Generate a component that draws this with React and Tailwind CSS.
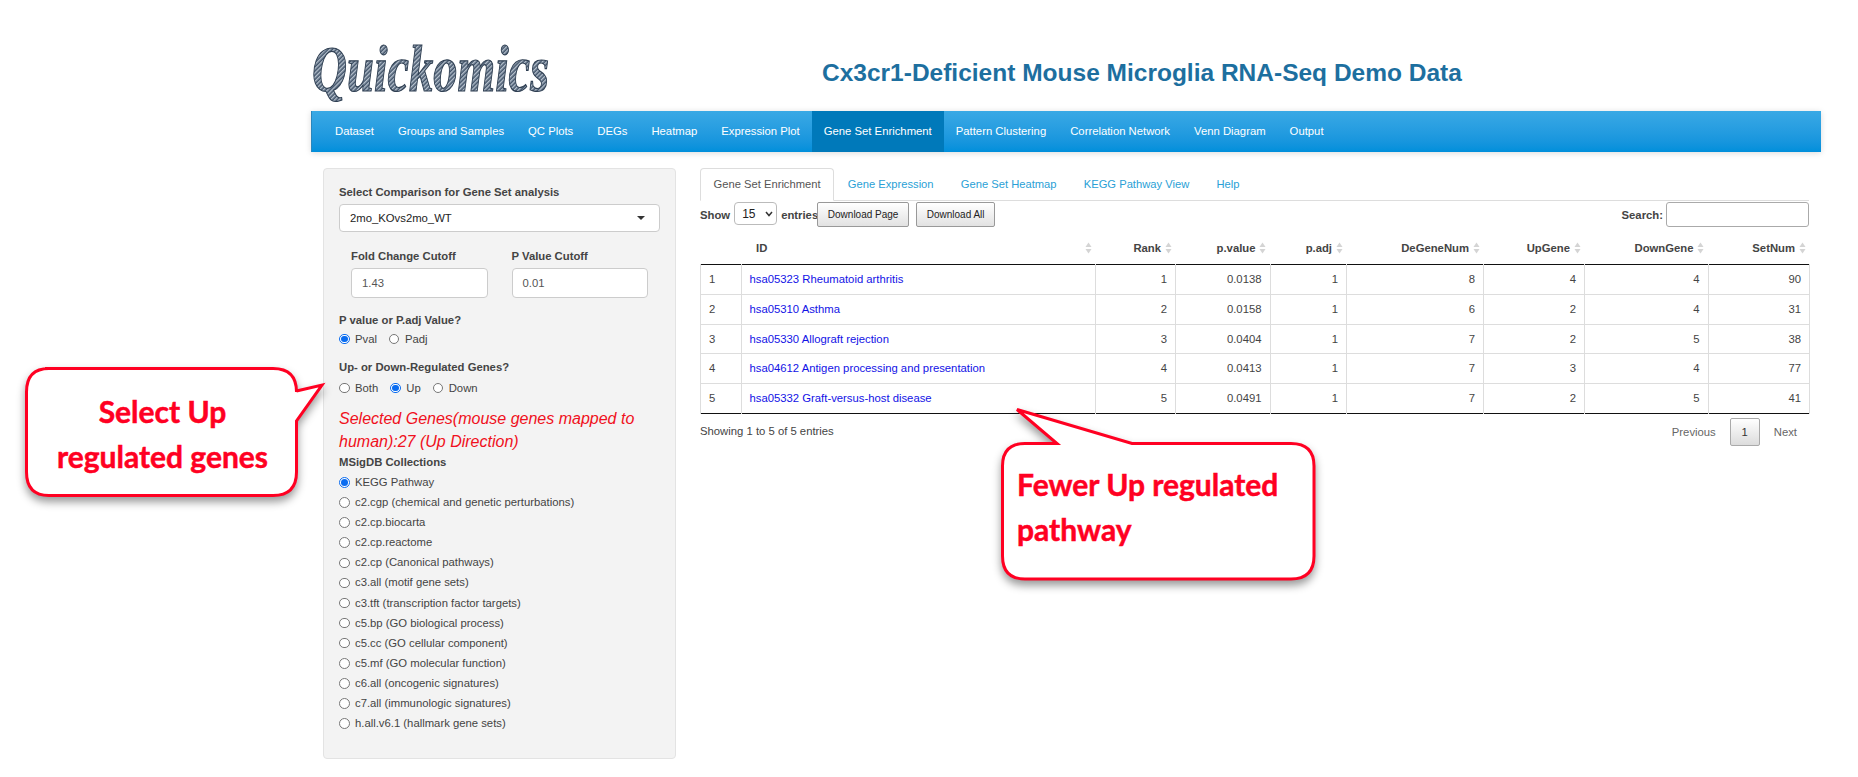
const navItems = ["Dataset","Groups and Samples","QC Plots","DEGs","Heatmap","Expression Plot","Gene Set Enrichment","Pattern Clustering","Correlation Network","Venn Diagram","Output"];
const tabs = ["Gene Set Enrichment","Gene Expression","Gene Set Heatmap","KEGG Pathway View","Help"];
const collections = ["KEGG Pathway","c2.cgp (chemical and genetic perturbations)","c2.cp.biocarta","c2.cp.reactome","c2.cp (Canonical pathways)","c3.all (motif gene sets)","c3.tft (transcription factor targets)","c5.bp (GO biological process)","c5.cc (GO cellular component)","c5.mf (GO molecular function)","c6.all (oncogenic signatures)","c7.all (immunologic signatures)","h.all.v6.1 (hallmark gene sets)"];
const headers = [
  ["", "w-[40.5px]"],["ID", "w-[354.5px]"],["Rank", "w-[80px]"],["p.value", "w-[94.5px]"],["p.adj", "w-[76.5px]"],["DeGeneNum", "w-[137px]"],["UpGene", "w-[101px]"],["DownGene", "w-[123.5px]"],["SetNum", "w-[101.5px]"],
];
const rows = [
  ["1","hsa05323 Rheumatoid arthritis","1","0.0138","1","8","4","4","90"],
  ["2","hsa05310 Asthma","2","0.0158","1","6","2","4","31"],
  ["3","hsa05330 Allograft rejection","3","0.0404","1","7","2","5","38"],
  ["4","hsa04612 Antigen processing and presentation","4","0.0413","1","7","3","4","77"],
  ["5","hsa05332 Graft-versus-host disease","5","0.0491","1","7","2","5","41"],
];

function Radio({ checked, label, className = "" }) {
  return (
    <label className={`flex items-center gap-[5.5px] ${className}`}>
      <span className={`w-[10.5px] h-[10.5px] rounded-full shrink-0 flex items-center justify-center bg-white border ${checked ? "border-[#0a6cf0]" : "border-[#777]"}`}>
        {checked && <span className="w-[6.5px] h-[6.5px] rounded-full bg-[#0a6cf0]" />}
      </span>
      <span>{label}</span>
    </label>
  );
}

function Sort({ className = "" }) {
  return (
    <svg width="7" height="12" viewBox="0 0 7 12" className={className}>
      <path d="M3.5 0.5 L6.5 5 H0.5 Z" fill="#d4d4d4" />
      <path d="M3.5 11.5 L6.5 7 H0.5 Z" fill="#d4d4d4" />
    </svg>
  );
}

function Logo() {
  return (
    <svg width="244" height="66" viewBox="0 0 244 66" role="img" aria-label="Quickomics" className="overflow-visible">
      <defs>
        <pattern id="rope" width="3" height="3" patternUnits="userSpaceOnUse" patternTransform="rotate(45)">
          <rect width="3" height="3" fill="#44566c" />
          <rect width="1.4" height="3" fill="#b6c1cd" />
        </pattern>
      </defs>
      <text x="1" y="49" fontFamily="'Liberation Serif', serif" fontStyle="italic" fontWeight="700" fontSize="66" textLength="237" lengthAdjust="spacingAndGlyphs" fill="url(#rope)" stroke="#2f3f52" strokeWidth="1.2">Quickomics</text>
    </svg>
  );
}

function Callout({ className, viewBox, width, height, d, children }) {
  return (
    <div className={`absolute ${className}`} style={{ width, height }}>
      <svg width={width} height={height} viewBox={viewBox} className="absolute inset-0 overflow-visible drop-shadow-[0_5px_4px_rgba(0,0,0,0.4)]">
        <path d={d} fill="#fff" stroke="#ff0022" strokeWidth="3" strokeLinejoin="miter" />
      </svg>
      {children}
    </div>
  );
}

export default function App() {
  return (
    <div className="relative w-[1858px] h-[777px] overflow-hidden bg-white text-[11.3px] text-[#333] font-['Liberation_Sans',Arial,sans-serif]">
      <div className="ml-[311px] w-[1510px]">
        <header className="h-[111px] flex items-start">
          <div className="w-[244px] h-[66px] mt-[42px] shrink-0"><Logo /></div>
          <h1 className="ml-[267px] mt-[59px] text-[24.5px] leading-[28px] font-bold text-[#1d6f9f] whitespace-nowrap">Cx3cr1-Deficient Mouse Microglia RNA-Seq Demo Data</h1>
        </header>
        <nav className="h-[41px] pl-[11px] flex bg-gradient-to-b from-[#39a9e5] to-[#008fdb] shadow-[0_1px_6px_rgba(0,0,0,0.15)] border-l border-[#2a86bd]">
          {navItems.map((n) => (
            <a key={n} className={`px-[12px] flex items-center text-white whitespace-nowrap ${n === "Gene Set Enrichment" ? "bg-[#0079ba]" : ""}`}>{n}</a>
          ))}
        </nav>
        <div className="flex mt-[16px]">
          <aside className="ml-[12px] w-[353px] h-[591px] shrink-0 bg-[#f3f3f3] border border-[#e3e3e3] rounded-[4px] pt-[16px] px-[15px] text-[#444]">
            <div className="font-bold leading-[14px]">Select Comparison for Gene Set analysis</div>
            <div className="mt-[5px] h-[28px] w-[321px] bg-white border border-[#ccc] rounded-[4px] flex items-center justify-between pl-[10px] pr-[14px] text-[#222]">
              <span>2mo_KOvs2mo_WT</span>
              <span className="w-0 h-0 border-x-[4px] border-x-transparent border-t-[4.5px] border-t-[#333]" />
            </div>
            <div className="flex gap-[24px] pl-[12px] mt-[17px]">
              {[["Fold Change Cutoff","1.43"],["P Value Cutoff","0.01"]].map(([l,v]) => (
                <div key={l} className="w-[136.5px]">
                  <div className="font-bold leading-[14px]">{l}</div>
                  <div className="mt-[5px] h-[30px] bg-white border border-[#ccc] rounded-[4px] flex items-center pl-[10px] text-[#555]">{v}</div>
                </div>
              ))}
            </div>
            <div className="font-bold leading-[14px] mt-[15px]">P value or P.adj Value?</div>
            <div className="flex gap-[12px] mt-[4px] h-[16px] items-center">
              <Radio checked label="Pval" /><Radio label="Padj" />
            </div>
            <div className="font-bold leading-[14px] mt-[13px]">Up- or Down-Regulated Genes?</div>
            <div className="flex gap-[12px] mt-[6px] h-[16px] items-center">
              <Radio label="Both" /><Radio checked label="Up" /><Radio label="Down" />
            </div>
            <div className="mt-[12px] text-[16px] leading-[22.5px] italic text-[#f01020]">Selected Genes(mouse genes mapped to human):27 (Up Direction)</div>
            <div className="font-bold leading-[14px] mt-[2px]">MSigDB Collections</div>
            <div className="mt-[3.4px] flex flex-col">
              {collections.map((c, i) => (
                <Radio key={c} checked={i === 0} label={c} className="h-[20.1px]" />
              ))}
            </div>
          </aside>
          <main className="ml-[24px] w-[1109px] shrink-0">
            <div className="flex h-[33px] border-b border-[#ddd] text-[11.2px]">
              {tabs.map((t, i) => (
                <a key={t} className={`h-[33px] flex items-center whitespace-nowrap rounded-t-[4px] border ${i === 0 ? "px-[12.6px] text-[#555] bg-white border-[#ddd] border-b-white" : "px-[12.6px] text-[#2a9fd6] border-transparent"}`}>{t}</a>
              ))}
            </div>
            <div className="flex items-start h-[34px]">
              <b className="mt-[6px] text-[#444]">Show</b>
              <div className="ml-[4px] mt-[1px] w-[43px] h-[23px] bg-white border border-[#bbb] rounded-[4px] flex items-center justify-between pl-[7px] pr-[3px] text-[12px] text-[#222]">
                <span>15</span>
                <svg width="8" height="6" viewBox="0 0 8 6"><path d="M1 1 L4 4.5 L7 1" fill="none" stroke="#333" strokeWidth="1.5" /></svg>
              </div>
              <b className="ml-[4px] mt-[6px] w-[36px] text-[#444] whitespace-nowrap">entries</b>
              <button className="mt-[1px] w-[92px] h-[25px] bg-gradient-to-b from-white to-[#e2e2e2] border border-[#999] rounded-[2px] text-[10px] text-[#222]">Download Page</button>
              <button className="ml-[7px] mt-[1px] w-[79px] h-[25px] bg-gradient-to-b from-white to-[#e2e2e2] border border-[#999] rounded-[2px] text-[10px] text-[#222]">Download All</button>
              <b className="ml-auto mt-[6px] text-[#444]">Search:</b>
              <div className="ml-[3px] mt-[1px] w-[143px] h-[25px] bg-white border border-[#aaa] rounded-[3px]" />
            </div>
            <table className="table-fixed border-collapse w-[1109px]">
              <thead>
                <tr className="border-b-[1.5px] border-[#111]">
                  {headers.map(([h, w], i) => (
                    <th key={i} className={`${w} p-0 pt-[6px] pb-[9px] font-bold leading-[14px] text-[#444]`}>
                      {h && (i === 1 ? (
                        <div className="flex items-center justify-between pl-[15px] pr-[4px]"><span>{h}</span><Sort /></div>
                      ) : (
                        <div className="flex items-center justify-end gap-[3.5px] pr-[4px]"><span>{h}</span><Sort /></div>
                      ))}
                    </th>
                  ))}
                </tr>
              </thead>
              <tbody>
                {rows.map((r) => (
                  <tr key={r[0]} className="h-[29.8px] border-b border-[#ddd] last:border-[#111]">
                    {r.map((c, i) => (
                      <td key={i} className={`px-[8px] py-0 border-x border-[#ddd] text-[#444] ${i < 2 ? "text-left" : "text-right"}`}>
                        {i === 1 ? <a className="text-[#1212e6]">{c}</a> : c}
                      </td>
                    ))}
                  </tr>
                ))}
              </tbody>
            </table>
            <div className="flex items-center justify-between mt-[4px] h-[28px] text-[#444]">
              <span className="mb-[2px]">Showing 1 to 5 of 5 entries</span>
              <div className="flex items-center">
                <span className="text-[#666] mr-[14px]">Previous</span>
                <span className="w-[30px] h-[28px] flex items-center justify-center bg-gradient-to-b from-white to-[#dcdcdc] border border-[#aaa] rounded-[2px] text-[#333]">1</span>
                <span className="text-[#666] ml-[14px] mr-[12px]">Next</span>
              </div>
            </div>
          </main>
        </div>
      </div>

      <Callout className="left-[23px] top-[366px]" width={302} height={132} viewBox="0 0 302 132"
        d="M22 2.5 H250 Q273.5 2.5 273.5 26 V25 L299 19 L273.5 55 V106 Q273.5 129.5 250 129.5 H26 Q3.5 129.5 3.5 106 V26 Q3.5 2.5 26 2.5 Z">
        <div className="absolute inset-x-[3px] top-[23px] w-[273px] text-center font-['Lato',sans-serif] font-bold [-webkit-text-stroke:0.5px_#ff0022] text-[#ff0022] text-[30px] leading-[45px]">Select Up<br />regulated genes</div>
      </Callout>
      <Callout className="left-[1001px] top-[408px]" width={316} height={173} viewBox="0 0 316 173"
        d="M24 35.5 H56 L16 1.5 L131 35.5 H290 Q313 35.5 313 58 V148 Q313 171 290 171 H24 Q1.5 171 1.5 148 V58 Q1.5 35.5 24 35.5 Z">
        <div className="absolute left-[16px] top-[54px] font-['Lato',sans-serif] font-bold [-webkit-text-stroke:0.5px_#ff0022] text-[#ff0022] text-[30px] leading-[45px] whitespace-nowrap">Fewer Up regulated<br />pathway</div>
      </Callout>
    </div>
  );
}
